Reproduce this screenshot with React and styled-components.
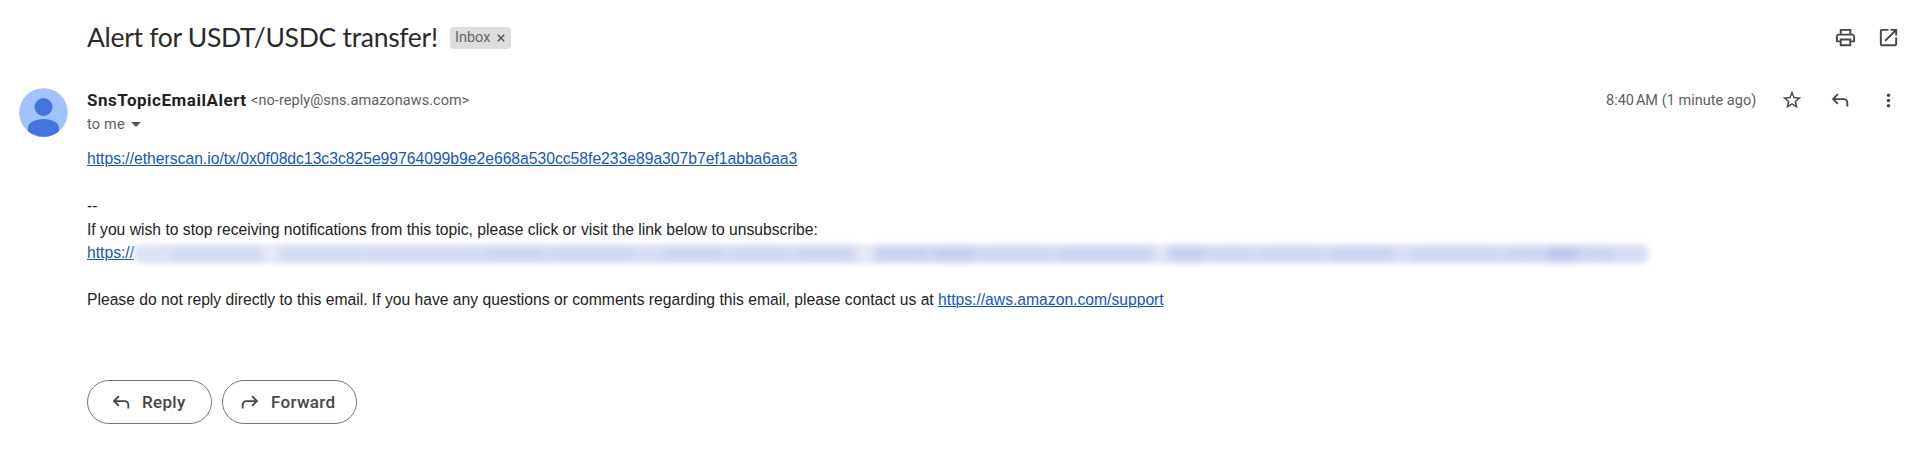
import React from "react";
import styled, { createGlobalStyle } from "styled-components";

const GlobalStyle = createGlobalStyle`
  * { box-sizing: border-box; }
  body { margin: 0; background: #fff; }
`;

const Page = styled.main`
  width: 1920px;
  height: 470px;
  padding: 17px 20px 0 19px;
  background: #fff;
  color: #202124;
  font-family: Roboto, sans-serif;
  overflow: hidden;
`;

const SubjectBar = styled.header`
  display: flex;
  align-items: center;
  height: 41px;
  padding-left: 68px;
`;

const Subject = styled.h1`
  margin: 0;
  width: 363px;
  font: 400 26.5px/41px Lato, sans-serif;
  letter-spacing: -0.3px;
  white-space: nowrap;
  color: #2a2a2a;
`;

const Label = styled.span`
  display: flex;
  align-items: center;
  gap: 7px;
  width: 61px;
  height: 22px;
  padding: 0 0 0 5px;
  border-radius: 4px;
  background: #ddd;
  color: #666;
  font-size: 14.5px;
  line-height: 22px;
`;

const Actions = styled.div`
  display: flex;
  align-items: center;
  gap: ${(p) => p.$gap}px;
  margin-left: auto;
`;

const IconButton = styled.button`
  display: grid;
  place-items: center;
  width: 24px;
  height: 24px;
  padding: 0;
  border: 0;
  background: none;
  color: #444746;
`;

const Message = styled.article`
  display: grid;
  grid-template-columns: 68px 1fr;
  margin-top: 30px;
`;

const Content = styled.div`
  min-width: 0;
`;

const SenderRow = styled.div`
  display: flex;
  align-items: center;
  height: 24px;
`;

const Sender = styled.span`
  width: 164px;
  font-size: 17px;
  font-weight: 700;
  letter-spacing: 0.52px;
  white-space: nowrap;
  color: #1f1f1f;
`;

const Address = styled.span`
  font-size: 14.5px;
  letter-spacing: 0.07px;
  color: #5e5e5e;
`;

const Time = styled.span`
  width: 149px;
  margin-right: 1px;
  font-size: 14.5px;
  letter-spacing: 0.02px;
  white-space: nowrap;
  color: #5e5e5e;
`;

const Recipient = styled.div`
  display: flex;
  align-items: center;
  gap: 6px;
  height: 24px;
  font-size: 14.5px;
  letter-spacing: 0.2px;
  color: #5e5e5e;
`;

const Caret = styled.span`
  border: 5px solid transparent;
  border-top: 5px solid #555;
  border-bottom: 0;
`;

const Body = styled.div`
  margin-top: 11px;
  font: 15.68px/23.5px "Liberation Sans", Arial, sans-serif;
  color: #222;
  white-space: nowrap;
`;

const Line = styled.div`
  display: flex;
  height: 23.5px;
`;

const Link = styled.a`
  color: #1155cc;
  text-decoration: underline;
  text-decoration-thickness: 1px;
  text-underline-offset: 1px;
`;

const Redaction = styled.span`
  display: flex;
  width: 1514px;
  height: 20px;
  margin: 3px 0 0 0;
  border-radius: 8px;
  background: #e8ebf8;
  filter: blur(2px);
`;

const Smudge = styled.span`
  flex: ${(p) => p.$size};
  margin: 4px 0;
  border-radius: 5px;
  background: rgba(165, 180, 232, ${(p) => p.$tone});
  filter: blur(4px);
`;

const Replies = styled.footer`
  display: flex;
  gap: 10px;
  margin-top: 68px;
`;

const PillButton = styled.button`
  display: flex;
  align-items: center;
  gap: ${(p) => p.$gap}px;
  width: ${(p) => p.$width}px;
  height: 44px;
  padding: 0 0 0 ${(p) => p.$inset}px;
  border: 1px solid #747775;
  border-radius: 22px;
  background: #fff;
  color: #444746;
  font: 500 17px/24px Roboto, sans-serif;
  letter-spacing: 0.3px;
`;

const Icon = ({ d, size = 24, flip }) => (
  <svg width={size} height={size} viewBox="0 0 24 24" fill="currentColor" transform={flip ? "scale(-1 1)" : undefined}>
    <path d={d} />
  </svg>
);

const PRINT = "M19 8h-1V3H6v5H5c-1.66 0-3 1.34-3 3v6h4v4h12v-4h4v-6c0-1.66-1.34-3-3-3zM8 5h8v3H8V5zm8 12v2H8v-4h8v2zm2-2v-2H6v2H4v-4c0-.55.45-1 1-1h14c.55 0 1 .45 1 1v4h-2z";
const OPEN = "M19 19H5V5h7V3H5a2 2 0 0 0-2 2v14a2 2 0 0 0 2 2h14c1.1 0 2-.9 2-2v-7h-2v7zM14 3v2h3.59l-9.83 9.83 1.41 1.41L19 6.41V10h2V3h-7z";
const STAR = "M22 9.24l-7.19-.62L12 2 9.19 8.63 2 9.24l5.46 4.73L5.82 21 12 17.27 18.18 21l-1.63-7.03L22 9.24zM12 15.4l-3.76 2.27 1-4.28-3.32-2.88 4.38-.38L12 6.1l1.71 4.04 4.38.38-3.32 2.88 1 4.28L12 15.4z";
const REPLY = "M19 19v-4q0-1.25-.875-2.125T16 12H6.825l3.6 3.6L9 17l-6-6 6-6 1.425 1.4-3.6 3.6H16q2.075 0 3.538 1.463T21 15v4h-2z";
const MORE = "M12 8c1.1 0 2-.9 2-2s-.9-2-2-2-2 .9-2 2 .9 2 2 2zm0 2c-1.1 0-2 .9-2 2s.9 2 2 2 2-.9 2-2-.9-2-2-2zm0 6c-1.1 0-2 .9-2 2s.9 2 2 2 2-.9 2-2-.9-2-2-2z";

const SMUDGES = [
  [34, 0.2], [88, 0.42], [14, 0], [82, 0.42], [112, 0.4], [60, 0.5], [85, 0.45],
  [22, 0.35], [62, 0.5], [64, 0.45], [60, 0.5], [15, 0], [55, 0.6], [44, 0.65],
  [75, 0.45], [92, 0.55], [12, 0.05], [36, 0.65], [46, 0.45], [70, 0.45], [64, 0.55],
  [10, 0.3], [90, 0.45], [40, 0.5], [35, 0.8], [35, 0.5], [28, 0.35],
];

export default function App() {
  return (
    <>
      <GlobalStyle />
      <Page>
        <SubjectBar>
          <Subject>Alert for USDT/USDC transfer!</Subject>
          <Label>
            Inbox
            <svg width="8" height="8" viewBox="0 0 8 8" stroke="#555" strokeWidth="1.5">
              <path d="M.8.8l6.4 6.4M7.2.8L.8 7.2" />
            </svg>
          </Label>
          <Actions $gap={19}>
            <IconButton aria-label="Print"><Icon d={PRINT} size={23} /></IconButton>
            <IconButton aria-label="Open in new window"><Icon d={OPEN} size={23} /></IconButton>
          </Actions>
        </SubjectBar>
        <Message>
          <svg width="49" height="49" viewBox="0 0 49 49">
            <clipPath id="face"><circle cx="24.5" cy="24.5" r="24.3" /></clipPath>
            <g clipPath="url(#face)">
              <rect width="49" height="49" fill="#a0c2ff" />
              <circle cx="24.5" cy="19" r="9" fill="#4374e0" />
              <path d="M9 49V40c0-5.500 7-9 15.500-9S40 34.500 40 40v9z" fill="#4374e0" />
            </g>
          </svg>
          <Content>
            <SenderRow>
              <Sender>SnsTopicEmailAlert</Sender>
              <Address>&lt;no-reply@sns.amazonaws.com&gt;</Address>
              <Actions $gap={24}>
                <Time>8:40{"\u202f"}AM (1 minute ago)</Time>
                <IconButton aria-label="Star"><Icon d={STAR} size={22} /></IconButton>
                <IconButton aria-label="Reply"><Icon d={REPLY} size={22} /></IconButton>
                <IconButton aria-label="More"><Icon d={MORE} size={21} /></IconButton>
              </Actions>
            </SenderRow>
            <Recipient>to me <Caret /></Recipient>
            <Body>
              <Line><Link>https://etherscan.io/tx/0x0f08dc13c3c825e99764099b9e2e668a530cc58fe233e89a307b7ef1abba6aa3</Link></Line>
              <Line />
              <Line>--</Line>
              <Line>If you wish to stop receiving notifications from this topic, please click or visit the link below to unsubscribe:</Line>
              <Line>
                <Link>https://</Link>
                <Redaction>
                  {SMUDGES.map(([size, tone], i) => <Smudge key={i} $size={size} $tone={tone} />)}
                </Redaction>
              </Line>
              <Line />
              <Line>
                <span>Please do not reply directly to this email. If you have any questions or comments regarding this email, please contact us at <Link>https://aws.amazon.com/support</Link></span>
              </Line>
            </Body>
            <Replies>
              <PillButton $width={125} $inset={22} $gap={10}><Icon d={REPLY} size={22} />Reply</PillButton>
              <PillButton $width={135} $inset={16} $gap={10}><Icon d={REPLY} size={22} flip />Forward</PillButton>
            </Replies>
          </Content>
        </Message>
      </Page>
    </>
  );
}
